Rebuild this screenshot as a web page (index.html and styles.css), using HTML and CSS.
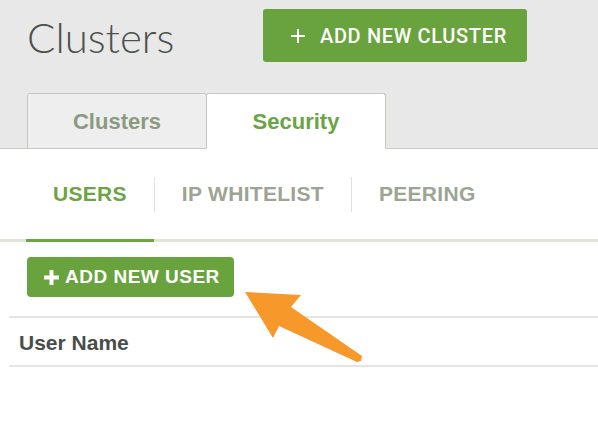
FILE: index.html
```html
<!DOCTYPE html>
<html>
<head>
<meta charset="utf-8">
<link rel="stylesheet" href="styles.css">
</head>
<body>
<div class="page">
  <header class="header">
    <div class="title-row">
      <h1 class="title">Clusters</h1>
      <button class="btn-cluster">
        <svg class="plus-thin" width="14" height="14" viewBox="0 0 14 14"><path d="M7 0V14M0 7H14" stroke="#fff" stroke-width="2"/></svg>
        <span>ADD NEW CLUSTER</span>
      </button>
    </div>
    <nav class="tabs">
      <div class="tab">Clusters</div>
      <div class="tab tab-active">Security</div>
    </nav>
  </header>

  <nav class="subnav">
    <div class="sub-item sub-active">USERS</div>
    <span class="sep"></span>
    <div class="sub-item">IP WHITELIST</div>
    <span class="sep"></span>
    <div class="sub-item">PEERING</div>
  </nav>

  <div class="actions">
    <button class="btn-user">
      <svg class="plus-bold" width="15" height="15" viewBox="0 0 15 15"><path d="M7.5 0V15M0 7.5H15" stroke="#fff" stroke-width="4"/></svg>
      <span>ADD NEW USER</span>
    </button>
  </div>

  <div class="table">
    <div class="th">User Name</div>
  </div>

  <svg class="arrow" width="598" height="427" viewBox="0 0 598 427">
    <polygon points="245,292 301,295 291,307 362,356 361,361 357,362 279,326 273,338" fill="#f7982b"/>
  </svg>
</div>
</body>
</html>
```

FILE: styles.css
```css
html, body {
  margin: 0;
  padding: 0;
  background: #ffffff;
}

.page {
  position: relative;
  width: 598px;
  height: 427px;
  overflow: hidden;
  font-family: "Liberation Sans", Arial, sans-serif;
}

.header {
  background: #e8e8e8;
  padding: 9px 0 0 27px;
  border-bottom: 1px solid #c6cbbf;
  height: 139px;
  box-sizing: content-box;
}

.title-row {
  display: flex;
  align-items: center;
  height: 53px;
}

.title {
  margin: 0;
  width: 236px;
  padding-top: 2px;
  font-family: Lato, "Liberation Sans", sans-serif;
  font-weight: 300;
  font-size: 42px;
  line-height: 42px;
  color: #4c514c;
}

.btn-cluster {
  display: flex;
  align-items: center;
  width: 264px;
  height: 53px;
  padding: 0 0 0 28px;
  border: none;
  border-radius: 3px;
  background: #68a33e;
  color: #ffffff;
  font-family: Roboto, "Liberation Sans", sans-serif;
  font-weight: 500;
  font-size: 20px;
  letter-spacing: 0.65px;
  box-sizing: border-box;
}

.plus-thin {
  margin-right: 15px;
  flex: none;
}

.tabs {
  display: flex;
  margin-top: 31px;
  height: 56px;
}

.tab {
  width: 180px;
  height: 56px;
  box-sizing: border-box;
  border: 1px solid #c4c9bd;
  border-radius: 3px 3px 0 0;
  background: #eeeeee;
  color: #8b9a80;
  font-weight: 700;
  font-size: 22px;
  line-height: 24px;
  padding-top: 16px;
  text-align: center;
}

.tab-active {
  margin-left: -1px;
  background: #ffffff;
  color: #6aa443;
  border-bottom-color: #ffffff;
}

.subnav {
  display: flex;
  padding-left: 26px;
  border-bottom: 3px solid #dfe4d8;
}

.sub-item {
  display: flex;
  align-items: center;
  height: 90px;
  padding: 0 27px;
  font-weight: 700;
  font-size: 21px;
  line-height: 20px;
  letter-spacing: 0.3px;
  color: #9ca493;
}

.sub-active {
  color: #6aa443;
  border-bottom: 3px solid #6aa443;
  margin-bottom: -3px;
}

.sep {
  align-self: center;
  width: 1px;
  height: 35px;
  background: #dfe2d9;
}

.actions {
  padding: 15px 0 0 27px;
}

.btn-user {
  display: flex;
  align-items: center;
  width: 207px;
  height: 40px;
  padding: 0 0 0 17px;
  border: none;
  border-radius: 4px;
  background: #68a33e;
  color: #ffffff;
  font-family: "Liberation Sans", Arial, sans-serif;
  font-weight: 700;
  font-size: 19px;
  letter-spacing: 0.5px;
  box-sizing: border-box;
}

.plus-bold {
  margin-right: 6px;
  flex: none;
}

.table {
  margin: 19px 0 0 9px;
  border-top: 2px solid #e4e4e4;
  border-bottom: 2px solid #e4e4e4;
}

.th {
  height: 45px;
  padding: 2px 0 0 10px;
  font-weight: 700;
  font-size: 21px;
  line-height: 45px;
  color: #4a4c4a;
}

.arrow {
  position: absolute;
  left: 0;
  top: 0;
  pointer-events: none;
}
```
